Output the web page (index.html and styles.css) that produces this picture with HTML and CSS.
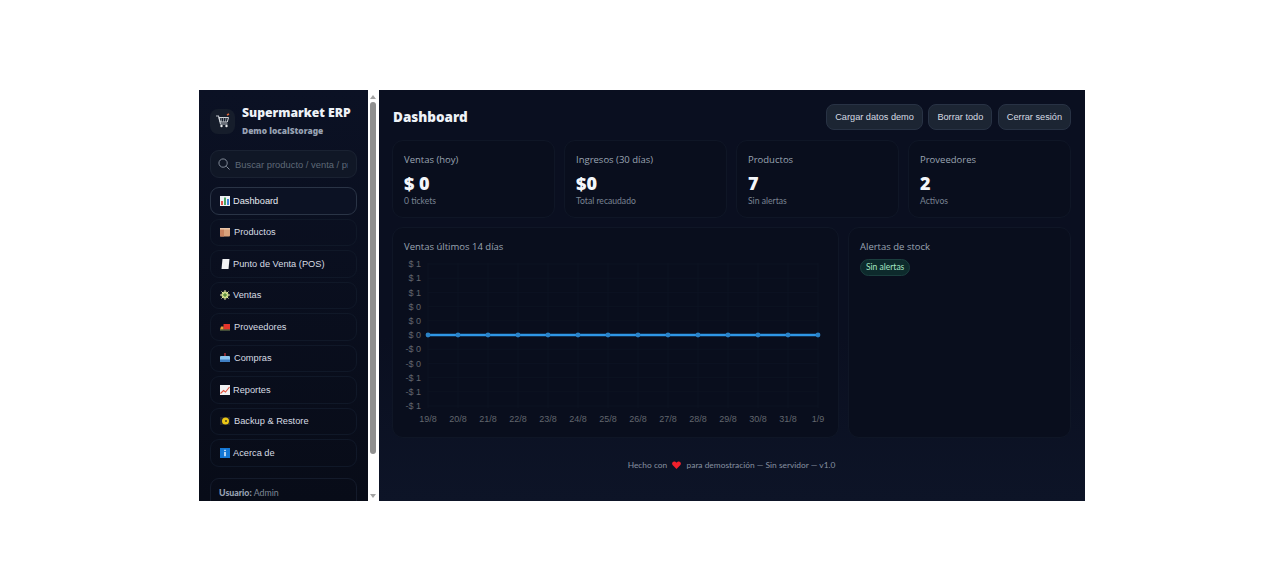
FILE: index.html
```html
<!DOCTYPE html>
<html lang="es">
<head>
<meta charset="utf-8">
<title>Supermarket ERP</title>
<link rel="stylesheet" href="styles.css">
</head>
<body>
<div class="app">
  <aside class="sidebar">
    <div class="brand">
      <div class="logo"><svg width="16" height="16" viewBox="0 0 16 16"><path d="M1 3h2.500l2 8h7" fill="none" stroke="#b9bfc6" stroke-width="1.200"/><path d="M4 4.500h9.500l-1.200 4.500H5.200z" fill="none" stroke="#d5d9dd" stroke-width="1"/><path d="M6 4.500l.6 4.500M8.500 4.500v4.500M11 4.500l-.6 4.500" stroke="#aeb4bb" stroke-width=".7"/><circle cx="6.500" cy="13" r="1.200" fill="#e8eaec"/><circle cx="11.500" cy="13" r="1.200" fill="#e8eaec"/><path d="M12 2l2-1" stroke="#e0653a" stroke-width="1.500"/></svg></div>
      <div class="brand-text">
        <div class="brand-name">Supermarket ERP</div>
        <div class="brand-sub">Demo localStorage</div>
      </div>
    </div>
    <div class="search">
      <svg class="search-icon" width="12" height="12" viewBox="0 0 13 13"><circle cx="5.500" cy="5.500" r="4.500" fill="none" stroke="#8b95a3" stroke-width="1"/><path d="M9 9l3.500 3.500" stroke="#8b95a3" stroke-width="1"/></svg>
      <input class="search-input" type="text" placeholder="Buscar producto / venta / proveedor">
    </div>
    <nav class="nav">
      <a class="nav-item active"><svg class="ico" viewBox="0 0 10 10"><rect width="10" height="10" fill="#eef1f4"/><rect x="1" y="5" width="2" height="4" fill="#e0524d"/><rect x="4" y="1.500" width="2" height="7.500" fill="#4aa564"/><rect x="7" y="3" width="2" height="6" fill="#3f83d8"/></svg>Dashboard</a>
      <a class="nav-item"><svg class="ico wide" viewBox="0 0 10 10"><rect y="1" width="10" height="8.500" rx="1" fill="#d9a27c"/><rect width="4" height="8.500" y="1" fill="#c9825f"/><rect x="0" y="1" width="10" height="1.500" fill="#eac5a8"/></svg>Productos</a>
      <a class="nav-item"><svg class="ico" viewBox="0 0 10 10"><path d="M2.500 0H9.500L8.500 10H1.500z" fill="#f1f2f3"/></svg>Punto de Venta (POS)</a>
      <a class="nav-item"><svg class="ico" viewBox="0 0 10 10"><circle cx="5" cy="5" r="3.500" fill="#b9d36b"/><path d="M5 0v10M0 5h10M1.500 1.500l7 7M8.500 1.500l-7 7" stroke="#e6e0b0" stroke-width="1"/><circle cx="5" cy="5" r="1.800" fill="#5a8f3c"/></svg>Ventas</a>
      <a class="nav-item"><svg class="ico wide" viewBox="0 0 10 10"><rect x="3.500" y="2" width="6.500" height="5.500" fill="#e5352b"/><path d="M0 7.500L1 4.500h2.500v3z" fill="#e8a33a"/><rect y="7.500" width="10" height="1" fill="#7b8a52"/></svg>Proveedores</a>
      <a class="nav-item"><svg class="ico wide" viewBox="0 0 10 10"><path d="M5 0v3" stroke="#d63a3a" stroke-width="1.200"/><rect y="3" width="10" height="5" rx="1" fill="#8cc4ee"/><rect y="6.500" width="10" height="2.500" fill="#3f7fc4"/></svg>Compras</a>
      <a class="nav-item"><svg class="ico" viewBox="0 0 10 10"><rect width="10" height="10" fill="#f1f2f3"/><path d="M.5 8.500L3.500 5.500 5.500 7 9.500 2" fill="none" stroke="#e2533f" stroke-width="1.100"/></svg>Reportes</a>
      <a class="nav-item"><svg class="ico wide" viewBox="0 0 10 10"><rect y="1" width="10" height="8" fill="#26262b"/><circle cx="5.500" cy="5" r="3.500" fill="#ecc816"/><circle cx="6" cy="5" r="1" fill="#4a4320"/></svg>Backup &amp; Restore</a>
      <a class="nav-item"><svg class="ico" viewBox="0 0 10 10"><rect width="10" height="10" fill="#1477d4"/><rect x="4.300" y="1.800" width="1.400" height="1.300" fill="#fff"/><rect x="4.300" y="4" width="1.400" height="4.200" fill="#fff"/></svg>Acerca de</a>
    </nav>
    <div class="user-box"><b>Usuario:</b> Admin</div>
  </aside>
  <div class="scrollbar" aria-hidden="true">
    <span class="arrow up"></span>
    <span class="thumb"></span>
    <span class="arrow down"></span>
  </div>
  <main class="main">
    <header class="topbar">
      <h1>Dashboard</h1>
      <div class="actions">
        <button class="btn">Cargar datos demo</button>
        <button class="btn">Borrar todo</button>
        <button class="btn">Cerrar sesión</button>
      </div>
    </header>
    <section class="kpis">
      <div class="card kpi"><div class="label">Ventas (hoy)</div><div class="value">$ 0</div><div class="note">0 tickets</div></div>
      <div class="card kpi"><div class="label">Ingresos (30 días)</div><div class="value">$0</div><div class="note">Total recaudado</div></div>
      <div class="card kpi"><div class="label">Productos</div><div class="value">7</div><div class="note">Sin alertas</div></div>
      <div class="card kpi"><div class="label">Proveedores</div><div class="value">2</div><div class="note">Activos</div></div>
    </section>
    <section class="panels">
      <div class="card chart-card">
        <div class="label">Ventas últimos 14 días</div>
        <svg class="chart" width="422" height="170" viewBox="0 0 422 170">
          <g class="grid">
            <path d="M24 5V150M54 5V150M84 5V150M114 5V150M144 5V150M174 5V150M204 5V150M234 5V150M264 5V150M294 5V150M324 5V150M354 5V150M384 5V150M414 5V150"/>
            <path d="M24 6H414M24 20.200H414M24 34.400H414M24 48.600H414M24 62.800H414M24 77H414M24 91.200H414M24 105.400H414M24 119.600H414M24 133.800H414M24 148H414"/>
          </g>
          <g class="axis y">
            <text x="17" y="9">$ 1</text><text x="17" y="23">$ 1</text><text x="17" y="38">$ 1</text><text x="17" y="52">$ 0</text><text x="17" y="66">$ 0</text><text x="17" y="80">$ 0</text><text x="17" y="94">-$ 0</text><text x="17" y="109">-$ 0</text><text x="17" y="123">-$ 1</text><text x="17" y="137">-$ 1</text><text x="17" y="151">-$ 1</text>
          </g>
          <g class="axis x">
            <text x="24" y="164">19/8</text><text x="54" y="164">20/8</text><text x="84" y="164">21/8</text><text x="114" y="164">22/8</text><text x="144" y="164">23/8</text><text x="174" y="164">24/8</text><text x="204" y="164">25/8</text><text x="234" y="164">26/8</text><text x="264" y="164">27/8</text><text x="294" y="164">28/8</text><text x="324" y="164">29/8</text><text x="354" y="164">30/8</text><text x="384" y="164">31/8</text><text x="414" y="164">1/9</text>
          </g>
          <path class="line" d="M24 77H414"/>
          <g class="dots">
            <circle cx="24" cy="77" r="2.400"/><circle cx="54" cy="77" r="2.400"/><circle cx="84" cy="77" r="2.400"/><circle cx="114" cy="77" r="2.400"/><circle cx="144" cy="77" r="2.400"/><circle cx="174" cy="77" r="2.400"/><circle cx="204" cy="77" r="2.400"/><circle cx="234" cy="77" r="2.400"/><circle cx="264" cy="77" r="2.400"/><circle cx="294" cy="77" r="2.400"/><circle cx="324" cy="77" r="2.400"/><circle cx="354" cy="77" r="2.400"/><circle cx="384" cy="77" r="2.400"/><circle cx="414" cy="77" r="2.400"/>
          </g>
        </svg>
      </div>
      <div class="card alerts-card">
        <div class="label">Alertas de stock</div>
        <span class="pill">Sin alertas</span>
      </div>
    </section>
    <footer class="foot">Hecho con <svg class="heart" width="9" height="8" viewBox="0 0 10 9"><path d="M5 9L.6 4.500C-.6 3 .2.500 2.500.500 3.700.500 4.500 1.200 5 2 5.500 1.200 6.300.500 7.500.500 9.800.500 10.600 3 9.400 4.500z" fill="#f0202c"/></svg> para demostración — Sin servidor — v1.0</footer>
  </main>
</div>
</body>
</html>
```
FILE: styles.css
```css
* { box-sizing: border-box; }
html, body { margin: 0; padding: 0; background: #fff; }
body { height: 588px; overflow: hidden; padding-top: 90px; font-family: "Open Sans", "Noto Sans", sans-serif; }
.app { width: 886px; height: 411px; margin: 0 0 0 199px; display: flex; overflow: hidden; background: #0b1020; }

.sidebar { width: 169px; flex: none; padding: 14px 11px 0; background: linear-gradient(180deg, #0b1124, #080c18); overflow: hidden; }
.brand { display: flex; align-items: center; gap: 7px; height: 36px; margin-top: -1px; }
.logo { width: 25px; height: 25px; border-radius: 8px; background: #161d2b; display: flex; align-items: center; justify-content: center; flex: none; }
.brand-name { font-family: "Noto Sans", sans-serif; font-weight: 900; font-size: 12.200px; line-height: 16px; color: #eef2f7; white-space: nowrap; }
.brand-sub { font-family: "Noto Sans", sans-serif; font-weight: 900; font-size: 8.400px; line-height: 12px; color: #98a2b3; margin-top: 4px; white-space: nowrap; }

.search { height: 28px; margin-top: 11px; border: 1px solid #1a2232; border-radius: 9px; background: #101726; display: flex; align-items: center; padding: 0 8px 0 7px; gap: 5px; overflow: hidden; }
.search-icon { flex: none; }
.search-input { flex: 1; min-width: 0; height: 100%; border: 0; outline: 0; padding: 0; background: transparent; font-family: "Liberation Sans", sans-serif; font-size: 9.400px; color: #d7dce3; }
.search-input::placeholder { color: #5f6977; opacity: 1; }

.nav { display: flex; flex-direction: column; gap: 4px; margin-top: 9px; }
.nav-item { height: 27.500px; border: 1px solid #101828; border-radius: 9px; display: flex; align-items: center; gap: 3px; padding-left: 9px; font-family: "Liberation Sans", sans-serif; font-size: 9.250px; color: #d7dce3; }
.nav-item.active { border-color: #2a3446; background: #0c1224; color: #e6eaf0; }
.ico { width: 10px; height: 10px; flex: none; }
.ico.wide { margin-right: 1px; }

.user-box { height: 40px; margin-top: 11px; border: 1px solid #141b2b; border-radius: 9px; padding: 8px; font-family: Lato, sans-serif; font-size: 8.800px; line-height: 12px; color: #7d8796; white-space: nowrap; }
.user-box b { color: #98a2b3; font-weight: 900; }

.scrollbar { width: 11px; flex: none; background: #fff; display: flex; flex-direction: column; align-items: center; padding: 5px 1px 3px 0; }
.thumb { width: 6px; height: 352px; margin: 3px 0 5px; background: #8f8f8f; border-radius: 3px; }
.arrow { width: 0; height: 0; border-left: 3.500px solid transparent; border-right: 3.500px solid transparent; }
.arrow.up { border-bottom: 4px solid #a3a3a3; }
.arrow.down { border-top: 4px solid #a3a3a3; margin-top: auto; }

.main { flex: 1; min-width: 0; padding: 14px 14px 0 13px; background: linear-gradient(180deg, #0a0f20 0%, #0a0f20 60%, #0d1427 100%); display: flex; flex-direction: column; }
.topbar { display: flex; align-items: center; justify-content: space-between; height: 26px; }
h1 { margin: 0 0 0 1px; font-family: "Noto Sans", sans-serif; font-weight: 900; font-size: 13.500px; color: #eef2f7; }
.actions { display: flex; gap: 5.500px; }
.btn { height: 26px; padding: 0 8px; border: 1px solid #283244; border-radius: 8px; background: #1c2533; color: #d5dae2; font-family: "Liberation Sans", sans-serif; font-size: 9.200px; }

.card { border: 1px solid #0f1626; border-radius: 11px; background: #090e1d; }
.label { font-size: 9.500px; line-height: 13px; color: #9aa4b2; }
.kpis { display: grid; grid-template-columns: repeat(4, 163px); gap: 9px; margin-top: 10px; }
.kpi { height: 78px; padding: 12px 11px 0; }
.value { font-family: "Noto Sans", sans-serif; font-weight: 900; font-size: 18px; line-height: 20px; color: #f3f6fa; margin-top: 7px; }
.note { font-family: Lato, sans-serif; font-size: 8.600px; line-height: 12px; color: #7a8493; margin-top: 2px; }

.panels { display: flex; gap: 9px; margin-top: 9px; }
.chart-card { width: 447px; height: 211px; padding: 12px 11px 0; }
.alerts-card { width: 223px; height: 211px; padding: 12px 11px 0; }
.chart { display: block; margin-top: 5px; }
.grid path { fill: none; stroke: #0d1322; stroke-width: 1; }
.axis text { font-family: "Liberation Sans", sans-serif; font-size: 9px; fill: #62666d; }
.axis.y text { text-anchor: end; }
.axis.x text { text-anchor: middle; }
.line { fill: none; stroke: #2f97e6; stroke-width: 2.500; }
.dots circle { fill: #2a82c6; }
.pill { display: inline-block; height: 17px; margin-top: 4px; padding: 0 5px; border: 1px solid #1b3e3e; border-radius: 9px; background: #0d2a2c; color: #a5e6c3; font-family: Lato, sans-serif; font-size: 8.500px; line-height: 14px; }

.foot { margin-top: 21px; text-align: center; font-family: Lato, sans-serif; font-size: 8.400px; line-height: 12px; color: #8791a0; }
.heart { vertical-align: -1px; margin: 0 3px; }
```
